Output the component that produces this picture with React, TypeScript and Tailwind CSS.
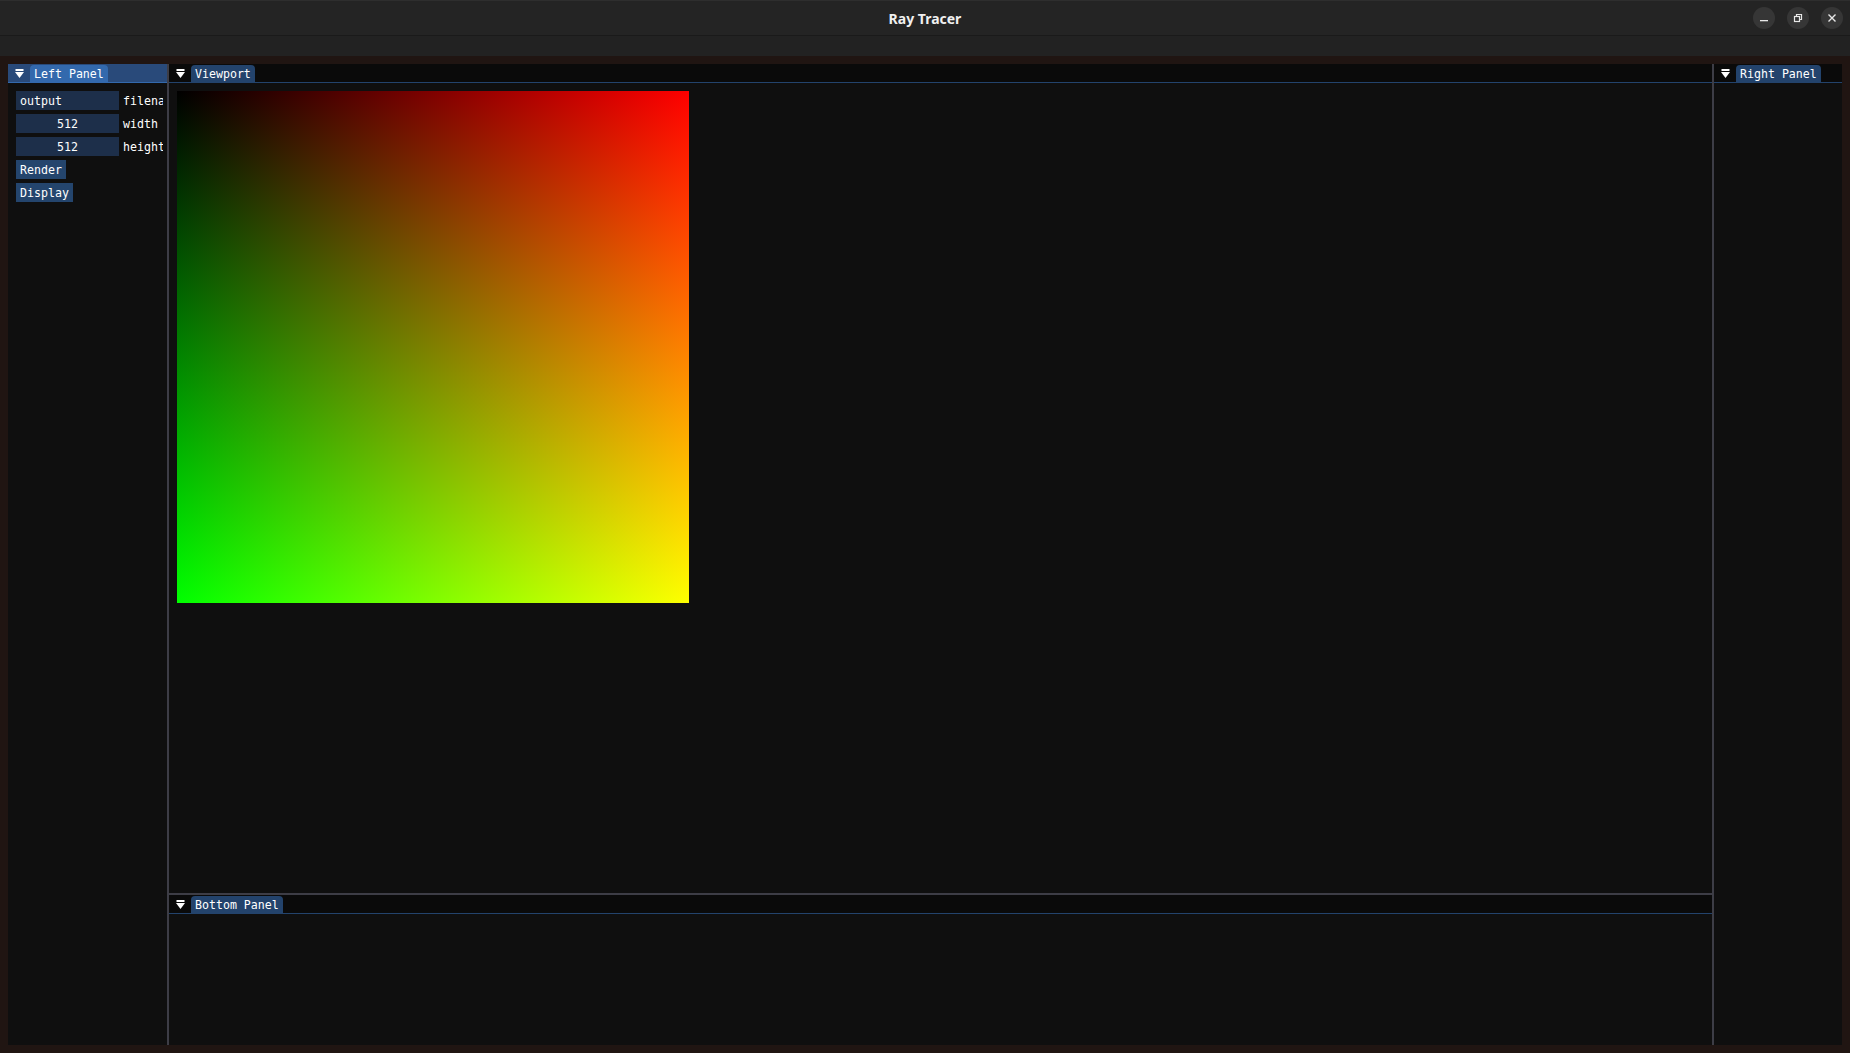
import React from "react";

const mono = { fontFamily: '"DejaVu Sans Mono", "Liberation Mono", monospace' };

function MenuTri() {
  return (
    <svg width="9" height="10" viewBox="0 0 9 10" className="shrink-0">
      <rect x="0.5" y="0" width="8" height="2" fill="#ffffff" />
      <polygon points="0,3 9,3 4.5,9" fill="#ffffff" />
    </svg>
  );
}

function TabBar({ label, focused }: { label: string; focused?: boolean }) {
  return (
    <div className="shrink-0">
      <div
        className={
          "h-[18px] flex items-end " + (focused ? "bg-[#294a7a]" : "bg-[#0a0a0a]")
        }
      >
        <div className="w-[22px] h-[18px] flex items-center pl-[7px] pt-[1px]">
          <MenuTri />
        </div>
        <div
          className={
            "h-[17px] px-[4px] pt-[2px] rounded-t-[4px] flex items-center text-white text-[11.6px] leading-none " +
            (focused ? "bg-[#3369ad]" : "bg-[#23436c]")
          }
          style={mono}
        >
          {label}
        </div>
      </div>
      <div className={"h-[1px] " + (focused ? "bg-[#3369ad]" : "bg-[#23436c]")} />
    </div>
  );
}

function InputRow({ value, label, center }: { value: string; label: string; center?: boolean }) {
  return (
    <div className="flex items-center h-[19px] gap-[4px] whitespace-nowrap">
      <div
        className={
          "w-[103px] h-[19px] shrink-0 bg-[#1d2f4a] flex items-center px-[4px] pt-[2px] text-white text-[11.6px] leading-none " +
          (center ? "justify-center" : "")
        }
        style={mono}
      >
        {value}
      </div>
      <span className="text-white text-[11.6px] leading-none pt-[2px]" style={mono}>
        {label}
      </span>
    </div>
  );
}

function Btn({ label }: { label: string }) {
  return (
    <div
      className="h-[19px] self-start px-[4px] pt-[2px] bg-[#24456d] flex items-center text-white text-[11.6px] leading-none"
      style={mono}
    >
      {label}
    </div>
  );
}

export default function App() {
  return (
    <div className="w-[1850px] h-[1053px] flex flex-col overflow-hidden bg-[#201512]">
      {/* Window title bar */}
      <div className="h-[36px] shrink-0 bg-[#242424] border-t border-[#2e2e2e] border-b border-b-[#1a1a1a] relative flex items-center justify-center">
        <span
          className="text-[#f0f0f0] text-[14px] font-bold"
          style={{ fontFamily: '"Noto Sans", "Open Sans", sans-serif' }}
        >
          Ray Tracer
        </span>
        <div className="absolute right-[7px] top-[6px] flex gap-[12px]">
          <div className="w-[22px] h-[22px] rounded-full bg-[#363636] flex items-center justify-center">
            <svg width="10" height="10" viewBox="0 0 10 10">
              <rect x="1" y="7" width="8" height="1.3" fill="#e8e8e8" />
            </svg>
          </div>
          <div className="w-[22px] h-[22px] rounded-full bg-[#363636] flex items-center justify-center">
            <svg width="10" height="10" viewBox="0 0 10 10" fill="none" stroke="#e8e8e8" strokeWidth="1.2">
              <rect x="1.5" y="3.5" width="5" height="5" />
              <path d="M3.5 3.5V1.5H8.5V6.5H6.5" />
            </svg>
          </div>
          <div className="w-[22px] h-[22px] rounded-full bg-[#363636] flex items-center justify-center">
            <svg width="10" height="10" viewBox="0 0 10 10" stroke="#e8e8e8" strokeWidth="1.4">
              <path d="M1.5 1.5L8.5 8.5M8.5 1.5L1.5 8.5" />
            </svg>
          </div>
        </div>
      </div>
      {/* menu strip */}
      <div className="h-[20px] shrink-0 bg-[#222222]" />

      {/* Dock area */}
      <div className="flex-1 flex p-[8px] min-h-0">
        {/* Left panel */}
        <div className="w-[159px] shrink-0 bg-[#0f0f0f] flex flex-col">
          <TabBar label="Left Panel" focused />
          <div className="mt-[8px] ml-[8px] mr-[4px] flex flex-col gap-[4px] overflow-hidden">
            <InputRow value="output" label="filename" />
            <InputRow value="512" label="width" center />
            <InputRow value="512" label="height" center />
            <Btn label="Render" />
            <Btn label="Display" />
          </div>
        </div>
        <div className="w-[2px] shrink-0 bg-[#3d3d46]" />

        {/* Center column */}
        <div className="w-[1543px] shrink-0 flex flex-col">
          <div className="flex-1 bg-[#0f0f0f] flex flex-col min-h-0">
            <TabBar label="Viewport" />
            <div className="pt-[8px] pl-[8px]">
              <div className="w-[512px] h-[512px] bg-[linear-gradient(to_bottom,#000000,#00ff00),linear-gradient(to_right,#000000,#ff0000)] bg-blend-screen" />
            </div>
          </div>
          <div className="h-[2px] shrink-0 bg-[#3d3d46]" />
          <div className="h-[150px] shrink-0 bg-[#0f0f0f] flex flex-col">
            <TabBar label="Bottom Panel" />
          </div>
        </div>
        <div className="w-[2px] shrink-0 bg-[#3d3d46]" />

        {/* Right panel */}
        <div className="flex-1 bg-[#0f0f0f] flex flex-col">
          <TabBar label="Right Panel" />
        </div>
      </div>
    </div>
  );
}
